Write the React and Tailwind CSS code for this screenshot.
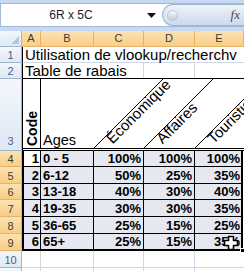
import React from "react";

const rows = [
  { h: "h-[16px]", code: 1, age: "0 - 5", c: "100%", d: "100%", e: "100%" },
  { h: "h-[17px]", code: 2, age: "6-12", c: "50%", d: "25%", e: "35%" },
  { h: "h-[16px]", code: 3, age: "13-18", c: "40%", d: "30%", e: "40%" },
  { h: "h-[17px]", code: 4, age: "19-35", c: "30%", d: "30%", e: "35%" },
  { h: "h-[17px]", code: 5, age: "36-65", c: "25%", d: "15%", e: "25%" },
  { h: "h-[15px]", code: 6, age: "65+", c: "25%", d: "15%", e: "35%" },
];

const orangeHead =
  "bg-gradient-to-b from-[#fbe2b3] to-[#f7cf86] border-[#e6b36a] text-[#3b3b3b]";
const blueHead =
  "bg-gradient-to-b from-[#f3f7fc] to-[#dfe8f5] border-[#9eb6ce] text-[#4d6185]";

function RowHead({ label, className, selected }) {
  return (
    <div
      className={`flex items-end justify-center pb-[1px] border-r border-b text-[11px] leading-none ${
        selected ? orangeHead : blueHead
      } ${className}`}
    >
      {label}
    </div>
  );
}

function ColHead({ label, className }) {
  return (
    <div
      className={`flex items-center justify-center border-r border-b text-[11px] leading-none ${orangeHead} ${className}`}
    >
      {label}
    </div>
  );
}

export default function App() {
  return (
    <div className="w-[244px] h-[271px] overflow-hidden relative bg-white font-['Liberation_Sans',Arial,sans-serif] text-black select-none">
      {/* formula bar */}
      <div className="h-[31px] bg-[#c6d9f1] pt-[3px] pb-[4px] flex">
        <div className="flex-1 flex items-center bg-white border-y border-l border-[#a2b8d6]">
          <div className="w-[140px] text-center text-[12px] text-[#1e1e1e]">6R x 5C</div>
          <svg width="9" height="5" viewBox="0 0 9 5" className="ml-[6px]">
            <path d="M0 0 H9 L4.5 5 Z" fill="#111" />
          </svg>
          <div className="ml-auto h-[22px] w-[82px] rounded-l-full border border-r-0 border-[#9fb4d0] bg-gradient-to-b from-[#eef3fa] to-[#ccdaed] flex items-center pl-[4px]">
            <div className="w-[11px] h-[11px] rounded-full border border-[#b9c4d2] bg-gradient-to-b from-[#f6f7f8] to-[#c9ced6]" />
            <span className="ml-auto mr-[4px] italic font-['Liberation_Serif',serif] text-[13px] text-[#4a4a4a]">
              fx
            </span>
          </div>
        </div>
      </div>

      {/* sheet */}
      <div className="flex">
        {/* row headers */}
        <div className="w-[22px] flex flex-col">
          <div className={`h-[16px] border-r border-b relative ${blueHead}`}>
            <svg width="8" height="8" className="absolute right-[2px] bottom-[2px]">
              <path d="M8 0 V8 H0 Z" fill="#b6c6db" />
            </svg>
          </div>
          <RowHead label="1" className="h-[16px]" />
          <RowHead label="2" className="h-[16px]" />
          <RowHead label="3" className="h-[72px] pb-[3px]" />
          {rows.map((r, i) => (
            <RowHead
              key={i}
              label={String(i + 4)}
              selected
              className={i === 5 ? "h-[17px]" : r.h}
            />
          ))}
          <RowHead label="10" className="h-[17px]" />
          <RowHead label="" className="h-[17px]" />
        </div>

        {/* cells */}
        <div className="flex-1 flex flex-col">
          <div className="h-[16px] flex">
            <ColHead label="A" className="w-[19px]" />
            <ColHead label="B" className="w-[53px]" />
            <ColHead label="C" className="w-[50px]" />
            <ColHead label="D" className="w-[51px]" />
            <ColHead label="E" className="flex-1" />
          </div>

          {/* row 1 */}
          <div className="h-[16px] flex items-center border-l border-black border-b border-b-[#d0d7e5] pl-[2px] text-[15px] leading-none whitespace-nowrap">
            Utilisation de vlookup/recherchv
          </div>

          {/* row 2 */}
          <div className="h-[16px] flex border-l border-black border-b">
            <div className="w-[121px] border-r border-[#d0d7e5] flex items-center pl-[2px] text-[15px] leading-none whitespace-nowrap">
              Table de rabais
            </div>
            <div className="w-[51px] border-r border-[#d0d7e5]" />
            <div className="flex-1" />
          </div>

          {/* row 3 */}
          <div className="h-[72px] flex border-l border-black border-b-[3px] border-double">
            <div className="w-[18px] border-r border-black flex items-end justify-center pb-[2px]">
              <span className="[writing-mode:vertical-rl] rotate-180 font-bold text-[14px] leading-none">
                Code
              </span>
            </div>
            <div className="w-[53px] flex items-end pl-[2px] pb-[1px] text-[14.5px] leading-none">
              Ages
            </div>
            <div className="flex-1 relative">
              <svg className="absolute inset-0" width="150" height="69">
                <path d="M0 69 L69 0 M50 69 L119 0 M101 69 L170 0" stroke="#000" strokeWidth="1" />
              </svg>
              <span className="absolute left-[20px] bottom-[2px] origin-bottom-left -rotate-45 text-[15px] leading-none whitespace-nowrap">
                Économique
              </span>
              <span className="absolute left-[70px] bottom-[2px] origin-bottom-left -rotate-45 text-[15px] leading-none whitespace-nowrap">
                Affaires
              </span>
              <span className="absolute left-[121px] bottom-[2px] origin-bottom-left -rotate-45 text-[15px] leading-none whitespace-nowrap">
                Touristique
              </span>
            </div>
          </div>

          {/* rows 4-9, selected */}
          <div className="relative mr-[1px] border-x-2 border-b-2 border-black">
            {rows.map((r, i) => (
              <div
                key={i}
                className={`${r.h} flex font-bold text-[13px] leading-none ${
                  i < 5 ? "border-b border-black" : ""
                }`}
              >
                <div
                  className={`w-[17px] border-r border-black flex items-center justify-end pr-[1px] ${
                    i === 0 ? "bg-white" : "bg-[#e6e8f1]"
                  }`}
                >
                  {r.code}
                </div>
                <div className="w-[53px] border-r border-black bg-[#e6e8f1] flex items-center pl-[2px]">
                  {r.age}
                </div>
                <div className="w-[50px] border-r border-black bg-[#e6e8f1] flex items-center justify-end pr-[2px]">
                  {r.c}
                </div>
                <div className="w-[51px] border-r border-black bg-[#e6e8f1] flex items-center justify-end pr-[2px]">
                  {r.d}
                </div>
                <div className="flex-1 bg-[#e6e8f1] flex items-center justify-end pr-[1px]">
                  {r.e}
                </div>
              </div>
            ))}
            <div className="absolute -right-[4px] -bottom-[4px] w-[5px] h-[5px] bg-black border border-white" />
          </div>

          {/* rows 10-11 */}
          {[0, 1].map((k) => (
            <div key={k} className="h-[17px] flex">
              <div className="w-[19px] border-r border-b border-[#d0d7e5]" />
              <div className="w-[53px] border-r border-b border-[#d0d7e5]" />
              <div className="w-[50px] border-r border-b border-[#d0d7e5]" />
              <div className="w-[51px] border-r border-b border-[#d0d7e5]" />
              <div className="flex-1 border-b border-[#d0d7e5]" />
            </div>
          ))}
        </div>
      </div>

      {/* mouse cursor */}
      <svg width="16" height="16" viewBox="0 0 16 16" className="absolute left-[223px] top-[235px]">
        <path
          d="M5.5 1.5 H10.5 V5.5 H14.5 V10.5 H10.5 V14.5 H5.5 V10.5 H1.5 V5.5 H5.5 Z"
          fill="#fff"
          stroke="#000"
          strokeWidth="1.6"
          strokeLinejoin="round"
        />
      </svg>
    </div>
  );
}
